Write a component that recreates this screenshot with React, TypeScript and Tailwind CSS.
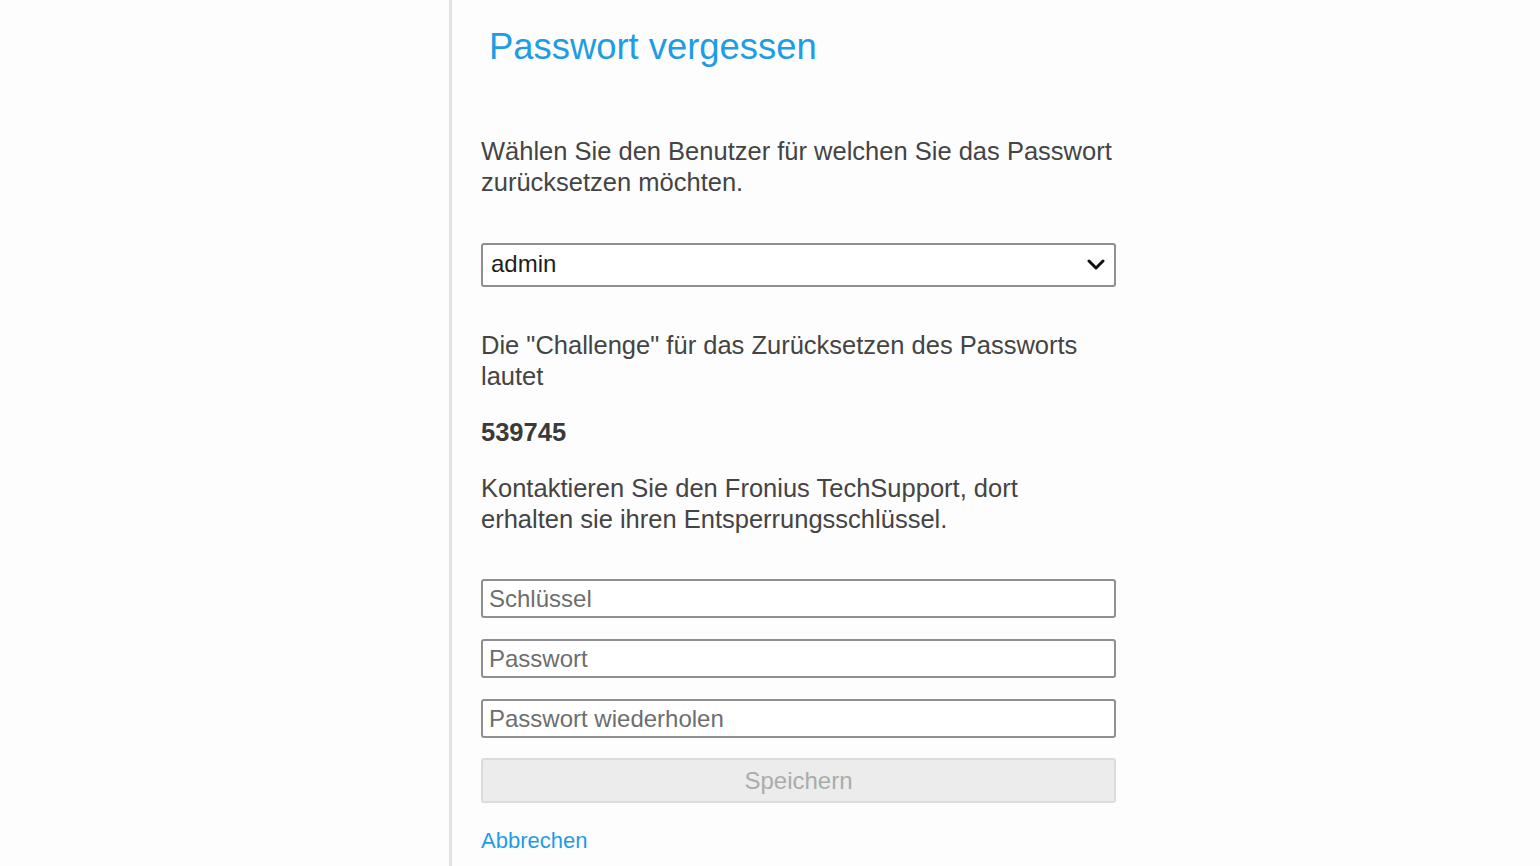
import React from "react";

export default function App() {
  const font = { fontFamily: '"Liberation Sans", Arial, sans-serif' };
  return (
    <div className="w-[1540px] h-[866px] bg-[#fdfdfd] flex overflow-hidden" style={font}>
      <div className="w-[449px] shrink-0" />
      <div className="w-[3px] shrink-0 bg-[#e2e2e2]" />
      <div className="pl-[29px] flex flex-col w-[665px]">
        <h1 className="mt-[26px] ml-[8px] text-[36.4px] leading-[42px] text-[#1f9ce6] whitespace-nowrap">
          Passwort vergessen
        </h1>
        <p className="mt-[68px] text-[25.5px] leading-[31px] text-[#444444] whitespace-nowrap">
          Wählen Sie den Benutzer für welchen Sie das Passwort
          <br />
          zurücksetzen möchten.
        </p>
        <div className="mt-[45px] w-[635px] h-[44px] border-2 border-[#8f8f8f] rounded-[3px] bg-white flex items-center justify-between pl-[8px] pr-[9px]">
          <span className="text-[24px] text-[#1e1e1e] -translate-y-[1px]">admin</span>
          <svg width="18" height="12" viewBox="0 0 18 12">
            <path d="M2 2 L9 9 L16 2" fill="none" stroke="#111" strokeWidth="3" strokeLinecap="round" strokeLinejoin="round" />
          </svg>
        </div>
        <p className="mt-[43px] text-[25.5px] leading-[31px] text-[#444444] whitespace-nowrap">
          Die "Challenge" für das Zurücksetzen des Passworts
          <br />
          lautet
        </p>
        <p className="mt-[25px] text-[25.5px] leading-[31px] font-bold text-[#3a3a3a]">539745</p>
        <p className="mt-[25px] text-[25.5px] leading-[31px] text-[#444444] whitespace-nowrap">
          Kontaktieren Sie den Fronius TechSupport, dort
          <br />
          erhalten sie ihren Entsperrungsschlüssel.
        </p>
        <div className="mt-[44px] flex flex-col gap-[21px] w-[635px]">
          {["Schlüssel", "Passwort", "Passwort wiederholen"].map((p) => (
            <input
              key={p}
              placeholder={p}
              className="h-[39px] w-full border-2 border-[#8f8f8f] rounded-[3px] bg-white px-[6px] text-[24px] text-[#222] placeholder:text-[#6e6e6e] outline-none"
              style={font}
            />
          ))}
        </div>
        <button
          disabled
          className="mt-[20px] w-[635px] h-[45px] border-2 border-[#dcdcdc] rounded-[3px] bg-[#ececec] text-[24px] text-[#ababab]"
          style={font}
        >
          Speichern
        </button>
        <a className="mt-[25px] text-[22px] leading-[26px] text-[#1f9ce6] cursor-pointer">Abbrechen</a>
      </div>
    </div>
  );
}
